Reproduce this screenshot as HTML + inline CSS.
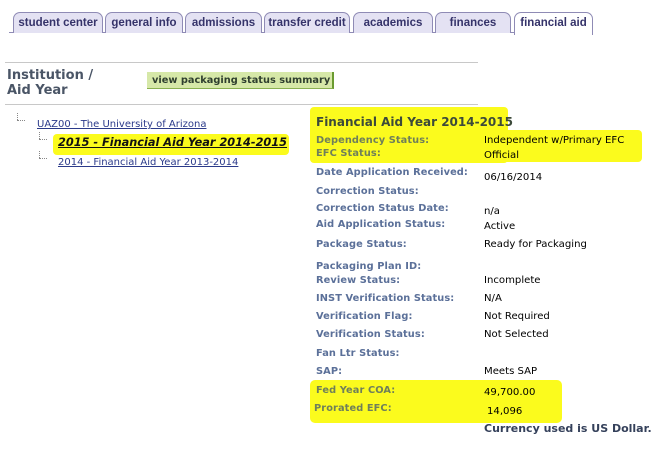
<!DOCTYPE html>
<html><head><style>
body{margin:0;width:662px;height:453px;background:#fff;position:relative;overflow:hidden;font-family:"DejaVu Sans",Verdana,sans-serif;}
.a{position:absolute;white-space:nowrap;}
.tab{position:absolute;top:12px;height:20px;border:1px solid #8f8bb5;border-bottom:none;border-radius:7px 7px 0 0;background:#e4e2f3;font:bold 11.5px "Liberation Sans",Arial,sans-serif;color:#35336a;text-align:center;line-height:20px;}
.tab.on{background:#fff;}
.lab{position:absolute;left:316px;font-weight:bold;font-size:9.8px;color:#5b7099;white-space:nowrap;letter-spacing:0.1px;margin-top:1px}
.val{position:absolute;left:484px;font-size:10.1px;color:#000;white-space:nowrap;margin-top:1px}
.hl{position:absolute;background:#fbfb1d;}
</style></head><body>
<div class="a" style="left:9px;top:32px;width:582px;height:1px;background:#8f8bb5"></div>
<div class="tab" style="left:13px;width:88px">student center</div>
<div class="tab" style="left:105px;width:76px">general info</div>
<div class="tab" style="left:185px;width:75px">admissions</div>
<div class="tab" style="left:264px;width:84px">transfer credit</div>
<div class="tab" style="left:353px;width:78px">academics</div>
<div class="tab" style="left:435px;width:74px">finances</div>
<div class="tab on" style="left:514px;width:77px;height:22px">financial aid</div>

<div class="a" style="left:5px;top:62px;width:473px;height:1px;background:#c8c8c8"></div>
<div class="a" style="left:5px;top:104px;width:473px;height:1px;background:#c8c8c8"></div>
<div class="a" style="left:7px;top:68px;font-weight:bold;font-size:13px;line-height:15px;color:#4a5566">Institution /<br>Aid Year</div>
<div class="a" style="left:147px;top:72px;width:187px;height:17px;background:#d6e8a8;border-right:2px solid #6a9a30;border-bottom:1px solid #8ab050;font-weight:bold;font-size:9.8px;line-height:17px;color:#2f3f2f;padding-left:5px;box-sizing:border-box">view packaging status summary</div>

<div class="a" style="left:17px;top:113px;width:1px;height:7px;border-left:1px dotted #888"></div>
<div class="a" style="left:17px;top:120px;width:8px;border-top:1px dotted #888"></div>
<div class="a" style="left:37px;top:119px;font-size:10px;color:#2b3a8a;text-decoration:underline">UAZ00 - The University of Arizona</div>
<div class="a" style="left:39px;top:132px;width:1px;height:7px;border-left:1px dotted #888"></div>
<div class="a" style="left:39px;top:139px;width:8px;border-top:1px dotted #888"></div>
<div class="a" style="left:39px;top:151px;width:1px;height:7px;border-left:1px dotted #888"></div>
<div class="a" style="left:39px;top:158px;width:8px;border-top:1px dotted #888"></div>
<div class="hl" style="left:53px;top:134px;width:236px;height:21px;border-radius:4px"></div>
<div class="a" style="left:58px;top:136px;font-size:11.3px;font-weight:bold;font-style:italic;color:#111;text-decoration:underline">2015 - Financial Aid Year 2014-2015</div>
<div class="a" style="left:58px;top:157px;font-size:10px;color:#2b3a8a;text-decoration:underline">2014 - Financial Aid Year 2013-2014</div>

<div class="hl" style="left:310px;top:107px;width:198px;height:56px;border-radius:4px"></div>
<div class="hl" style="left:480px;top:130px;width:162px;height:32px;border-radius:4px"></div>
<div class="hl" style="left:310px;top:380px;width:252px;height:43px;border-radius:5px"></div>

<div class="a" style="left:316px;top:115px;font-weight:bold;font-size:12px;color:#3c4a3a">Financial Aid Year 2014-2015</div>
<div class="lab" style="top:134px;color:#6f7f5a">Dependency Status:</div><div class="val" style="top:134px">Independent w/Primary EFC</div>
<div class="lab" style="top:147px;color:#6f7f5a">EFC Status:</div><div class="val" style="top:149px">Official</div>
<div class="lab" style="top:166px">Date Application Received:</div><div class="val" style="top:171px">06/16/2014</div>
<div class="lab" style="top:185px">Correction Status:</div>
<div class="lab" style="top:202px">Correction Status Date:</div><div class="val" style="top:205px">n/a</div>
<div class="lab" style="top:218px">Aid Application Status:</div><div class="val" style="top:220px">Active</div>
<div class="lab" style="top:238px">Package Status:</div><div class="val" style="top:238px">Ready for Packaging</div>
<div class="lab" style="top:260px">Packaging Plan ID:</div>
<div class="lab" style="top:274px">Review Status:</div><div class="val" style="top:274px">Incomplete</div>
<div class="lab" style="top:292px">INST Verification Status:</div><div class="val" style="top:292px">N/A</div>
<div class="lab" style="top:310px">Verification Flag:</div><div class="val" style="top:310px">Not Required</div>
<div class="lab" style="top:328px">Verification Status:</div><div class="val" style="top:328px">Not Selected</div>
<div class="lab" style="top:347px">Fan Ltr Status:</div>
<div class="lab" style="top:365px">SAP:</div><div class="val" style="top:365px">Meets SAP</div>
<div class="lab" style="top:384px;color:#6f7f5a">Fed Year COA:</div><div class="val" style="top:386px">49,700.00</div>
<div class="lab" style="top:402px;left:314px;color:#6f7f5a">Prorated EFC:</div><div class="val" style="top:405px;left:487px">14,096</div>
<div class="a" style="left:484px;top:422px;font-weight:bold;font-size:11px;color:#34405a">Currency used is US Dollar.</div>
</body></html>
